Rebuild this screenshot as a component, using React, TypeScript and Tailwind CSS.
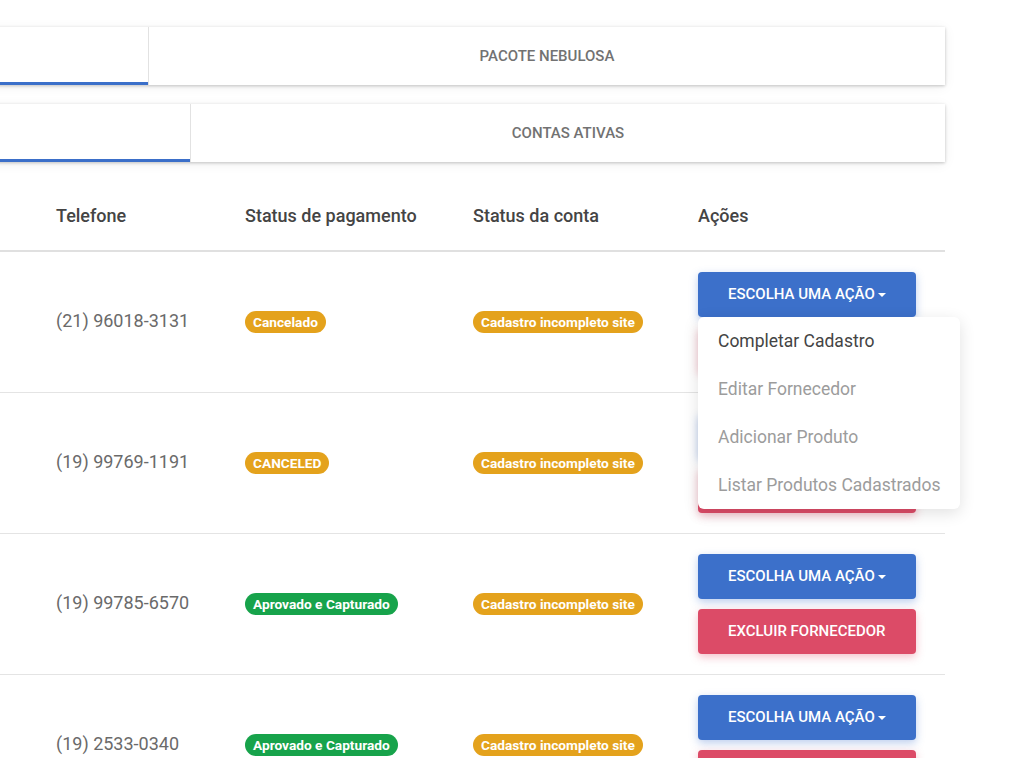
import React from 'react';

type Badge = { label: string; tone: 'orange' | 'green' };

interface Row {
  phone: string;
  payment: Badge;
  account: Badge;
}

const rows: Row[] = [
  { phone: '(21) 96018-3131', payment: { label: 'Cancelado', tone: 'orange' }, account: { label: 'Cadastro incompleto site', tone: 'orange' } },
  { phone: '(19) 99769-1191', payment: { label: 'CANCELED', tone: 'orange' }, account: { label: 'Cadastro incompleto site', tone: 'orange' } },
  { phone: '(19) 99785-6570', payment: { label: 'Aprovado e Capturado', tone: 'green' }, account: { label: 'Cadastro incompleto site', tone: 'orange' } },
  { phone: '(19) 2533-0340', payment: { label: 'Aprovado e Capturado', tone: 'green' }, account: { label: 'Cadastro incompleto site', tone: 'orange' } },
];

const menuItems = [
  { label: 'Completar Cadastro', enabled: true },
  { label: 'Editar Fornecedor', enabled: false },
  { label: 'Adicionar Produto', enabled: false },
  { label: 'Listar Produtos Cadastrados', enabled: false },
];

const gridCols = 'grid w-[955px] grid-cols-[66px_189px_228px_225px_247px]';

const StatusBadge: React.FC<{ badge: Badge }> = ({ badge }) => (
  <span
    className={
      badge.tone === 'green'
        ? 'inline-flex h-[22px] items-center whitespace-nowrap rounded-full bg-[#17a34b] px-[8px] text-[13.7px] font-bold text-white'
        : 'inline-flex h-[22px] items-center whitespace-nowrap rounded-full bg-[#e4a21c] px-[8px] text-[13.7px] font-bold text-white'
    }
  >
    {badge.label}
  </span>
);

const TabBar: React.FC<{ activeWidth: string; label: string }> = ({ activeWidth, label }) => (
  <div className="flex h-[58px] bg-white shadow-[0_1px_3px_rgba(0,0,0,0.22),0_2px_12px_rgba(0,0,0,0.06)]">
    <div className={`${activeWidth} border-b-[3px] border-[#3b6fc9]`} />
    <div className="flex flex-1 items-center justify-center border-l border-[#e2e2e2] text-[15px] font-medium uppercase text-[#727272]">
      {label}
    </div>
  </div>
);

export default function App() {
  return (
    <div className="h-[783px] w-[1025px] overflow-hidden bg-white font-['Roboto',sans-serif]">
      <div className="-ml-[10px] pt-[27px]">
        <div className="w-[955px]">
          <TabBar activeWidth="w-[158px]" label="Pacote Nebulosa" />
          <div className="mt-[19px]">
            <TabBar activeWidth="w-[200px]" label="Contas Ativas" />
          </div>
        </div>

        {/* tabela de fornecedores */}
        <div className="mt-[23px] h-[573px] w-[1035px] overflow-hidden">
          <div className={`${gridCols} h-[67px] items-center border-b-2 border-[#e0e0e0] pb-[4px] text-[18px] font-medium text-[#444]`}>
            <div />
            <div>Telefone</div>
            <div>Status de pagamento</div>
            <div>Status da conta</div>
            <div>Ações</div>
          </div>

          {rows.map((row, i) => (
            <div key={i} className={`${gridCols} h-[141px] items-center border-b border-[#e4e4e4]`}>
              <div />
              <div className="pb-[4px] text-[18px] text-[#6a6a6a]">{row.phone}</div>
              <div>
                <StatusBadge badge={row.payment} />
              </div>
              <div>
                <StatusBadge badge={row.account} />
              </div>
              <div className={i === 0 ? 'relative z-10 flex flex-col items-start gap-[10px]' : 'flex flex-col items-start gap-[10px]'}>
                <button className="flex h-[45px] items-center whitespace-nowrap rounded-[4px] bg-[#3c70ca] px-[30px] text-[15px] font-medium uppercase text-white shadow-[0_3px_8px_rgba(60,112,202,0.35)]">
                  Escolha uma ação
                  <span className="ml-[3px] h-0 w-0 border-x-[4px] border-t-[4px] border-x-transparent border-t-white" />
                </button>
                <button className="flex h-[45px] items-center whitespace-nowrap rounded-[4px] bg-[#dc4b67] px-[30px] text-[15px] font-medium uppercase text-white shadow-[0_3px_8px_rgba(220,75,103,0.35)]">
                  Excluir fornecedor
                </button>

                {i === 0 && (
                  <div className="absolute left-0 top-[45px] w-[262px] rounded-[6px] bg-white shadow-[0_4px_16px_rgba(0,0,0,0.12)]">
                    {menuItems.map((item) => (
                      <div
                        key={item.label}
                        className={
                          item.enabled
                            ? 'flex h-[48px] items-center whitespace-nowrap px-[20px] text-[17.5px] text-[#444]'
                            : 'flex h-[48px] items-center whitespace-nowrap px-[20px] text-[17.5px] text-[#9c9c9c]'
                        }
                      >
                        {item.label}
                      </div>
                    ))}
                  </div>
                )}
              </div>
            </div>
          ))}
        </div>
      </div>
    </div>
  );
}
